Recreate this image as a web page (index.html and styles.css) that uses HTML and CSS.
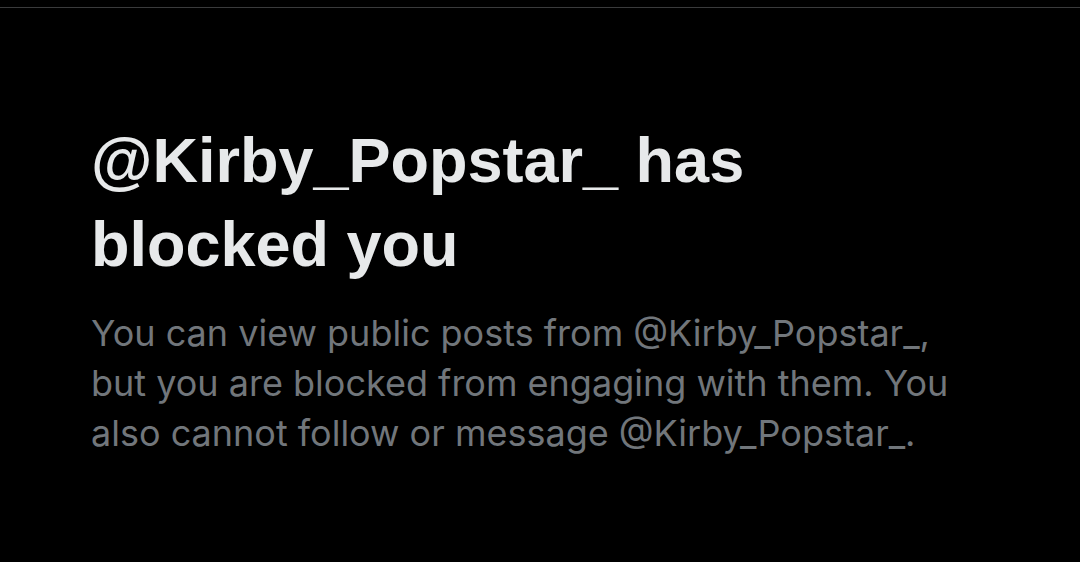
FILE: index.html
```html
<!DOCTYPE html>
<html>
<head>
<meta charset="utf-8">
<link rel="stylesheet" href="styles.css">
</head>
<body>
<div class="topline"></div>
<main class="content">
  <h1 class="title">@Kirby_Popstar_ has blocked you</h1>
  <p class="desc">You can view public posts from @Kirby_Popstar_, but you are blocked from engaging with them. You also cannot follow or message @Kirby_Popstar_.</p>
</main>
</body>
</html>
```
FILE: styles.css
```css
html, body {
  margin: 0;
  padding: 0;
  background: #000;
  height: 100%;
  overflow: hidden;
}
.topline {
  margin-top: 7px;
  height: 1px;
  background: #3a3b3c;
}
.content {
  padding: 110px 0 0 91px;
  width: 900px;
}
.title {
  margin: 0;
  font-family: "Liberation Sans", Arial, sans-serif;
  font-weight: 700;
  font-size: 63px;
  line-height: 84px;
  color: #e7e9ea;
  width: 700px;
}
.desc {
  margin: 22px 0 0 0;
  font-family: Inter, "Liberation Sans", sans-serif;
  font-size: 36px;
  line-height: 50px;
  color: #71767b;
  width: 880px;
}
```
